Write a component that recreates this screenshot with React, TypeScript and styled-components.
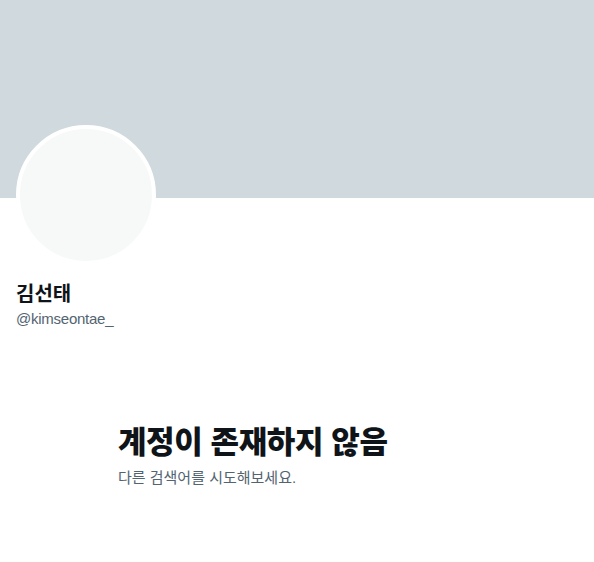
import React from 'react';
import styled, { createGlobalStyle } from 'styled-components';

const GlobalStyle = createGlobalStyle`
    html, body {
        margin: 0;
        padding: 0;
        background: #ffffff;
    }
    body {
        font-family: "Liberation Sans", "Noto Sans CJK KR", sans-serif;
        color: #0f1419;
    }
`;

const Page = styled.div`
    width: 594px;
    min-height: 562px;
    display: flex;
    flex-direction: column;
`;

const Banner = styled.div`
    height: 198px;
    background: #cfd9de;
`;

const ProfileHead = styled.div`
    display: flex;
    flex-direction: column;
    padding: 0 16px;
`;

const Avatar = styled.div`
    width: 132px;
    height: 132px;
    margin-top: -73px;
    border: 4px solid #ffffff;
    border-radius: 50%;
    background: #f7f9f9;
`;

const Name = styled.div`
    margin-top: 17px;
    font-size: 20px;
    line-height: 24px;
    font-weight: 700;
    color: #0f1419;
`;

const Handle = styled.div`
    margin-top: 3px;
    font-size: 15px;
    line-height: 20px;
    letter-spacing: -0.25px;
    color: #536471;
`;

const Empty = styled.div`
    display: flex;
    flex-direction: column;
    gap: 7px;
    padding: 96px 0 0 118px;
`;

const Title = styled.div`
    font-size: 31px;
    line-height: 36px;
    font-weight: 800;
    letter-spacing: -0.4px;
    color: #0f1419;
`;

const Hint = styled.div`
    font-size: 15px;
    line-height: 20px;
    color: #536471;
`;

const App = () => {
    return (
        <Page>
            <GlobalStyle />
            <Banner />
            <ProfileHead>
                <Avatar />
                <Name>김선태</Name>
                <Handle>@kimseontae_</Handle>
            </ProfileHead>
            <Empty>
                <Title>계정이 존재하지 않음</Title>
                <Hint>다른 검색어를 시도해보세요.</Hint>
            </Empty>
        </Page>
    );
};

export default App;
